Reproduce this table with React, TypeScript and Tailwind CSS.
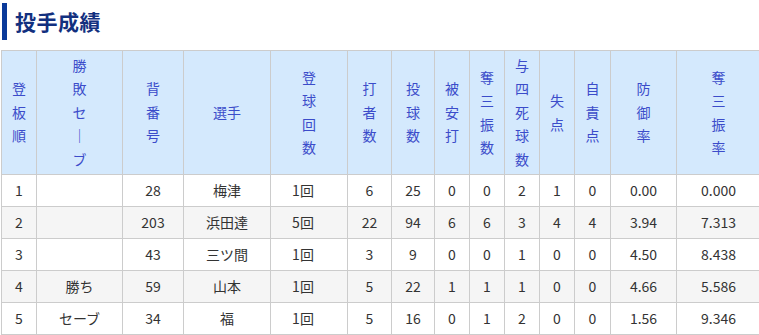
const cols = [35, 86, 61, 87, 77, 44, 43, 35, 35, 35, 35, 36, 66, 84];

// each entry is one header cell, split into stacked lines
const headers = [
  ["登", "板", "順"],
  ["勝", "敗", "セ", "｜", "ブ"],
  ["背", "番", "号"],
  ["選手"],
  ["登", "球", "回", "数"],
  ["打", "者", "数"],
  ["投", "球", "数"],
  ["被", "安", "打"],
  ["奪", "三", "振", "数"],
  ["与", "四", "死", "球", "数"],
  ["失", "点"],
  ["自", "責", "点"],
  ["防", "御", "率"],
  ["奪", "三", "振", "率"],
];

const rows = [
  ["1", "", "28", "梅津", "1回", "6", "25", "0", "0", "2", "1", "0", "0.00", "0.000"],
  ["2", "", "203", "浜田達", "5回", "22", "94", "6", "6", "3", "4", "4", "3.94", "7.313"],
  ["3", "", "43", "三ツ間", "1回", "3", "9", "0", "0", "1", "0", "0", "4.50", "8.438"],
  ["4", "勝ち", "59", "山本", "1回", "5", "22", "1", "1", "1", "0", "0", "4.66", "5.586"],
  ["5", "セーブ", "34", "福", "1回", "5", "16", "0", "1", "2", "0", "0", "1.56", "9.346"],
];

export default function App() {
  return (
    <div className="w-[759px] h-[335px] overflow-hidden bg-white font-['Noto_Sans_CJK_JP','Noto_Sans',sans-serif]">
      {/* Section title */}
      <div className="ml-[2px] mt-[3px] h-[37px] flex items-center border-l-[5px] border-[#0a3a9a] pl-[8px]">
        <h2 className="text-[21px] font-bold leading-none text-[#12307f] tracking-[0.5px]">投手成績</h2>
      </div>

      <table className="mt-[10px] ml-px w-[759px] table-fixed border-collapse text-[14px] text-[#333]">
        <colgroup>
          {cols.map((w, i) => (
            <col key={i} style={{ width: w }} />
          ))}
        </colgroup>
        <thead>
          <tr>
            {headers.map((h, i) => (
              <th
                key={i}
                className="border border-[#cccccc] bg-[#d4e9fd] px-0 py-[3px] text-center align-middle font-normal leading-[23.4px] text-[#3b4cca]"
              >
                {h.map((c, j) => (
                  <div key={j}>{c}</div>
                ))}
              </th>
            ))}
          </tr>
        </thead>
        <tbody>
          {rows.map((r, i) => (
            <tr key={i} className={i % 2 === 1 ? "bg-[#f5f5f5]" : "bg-white"}>
              {r.map((v, j) => (
                <td
                  key={j}
                  className={
                    "border border-[#cccccc] p-0 text-center leading-[31px] " +
                    (j === 4 ? "pr-3" : "")
                  }
                >
                  {v}
                </td>
              ))}
            </tr>
          ))}
        </tbody>
      </table>
    </div>
  );
}
